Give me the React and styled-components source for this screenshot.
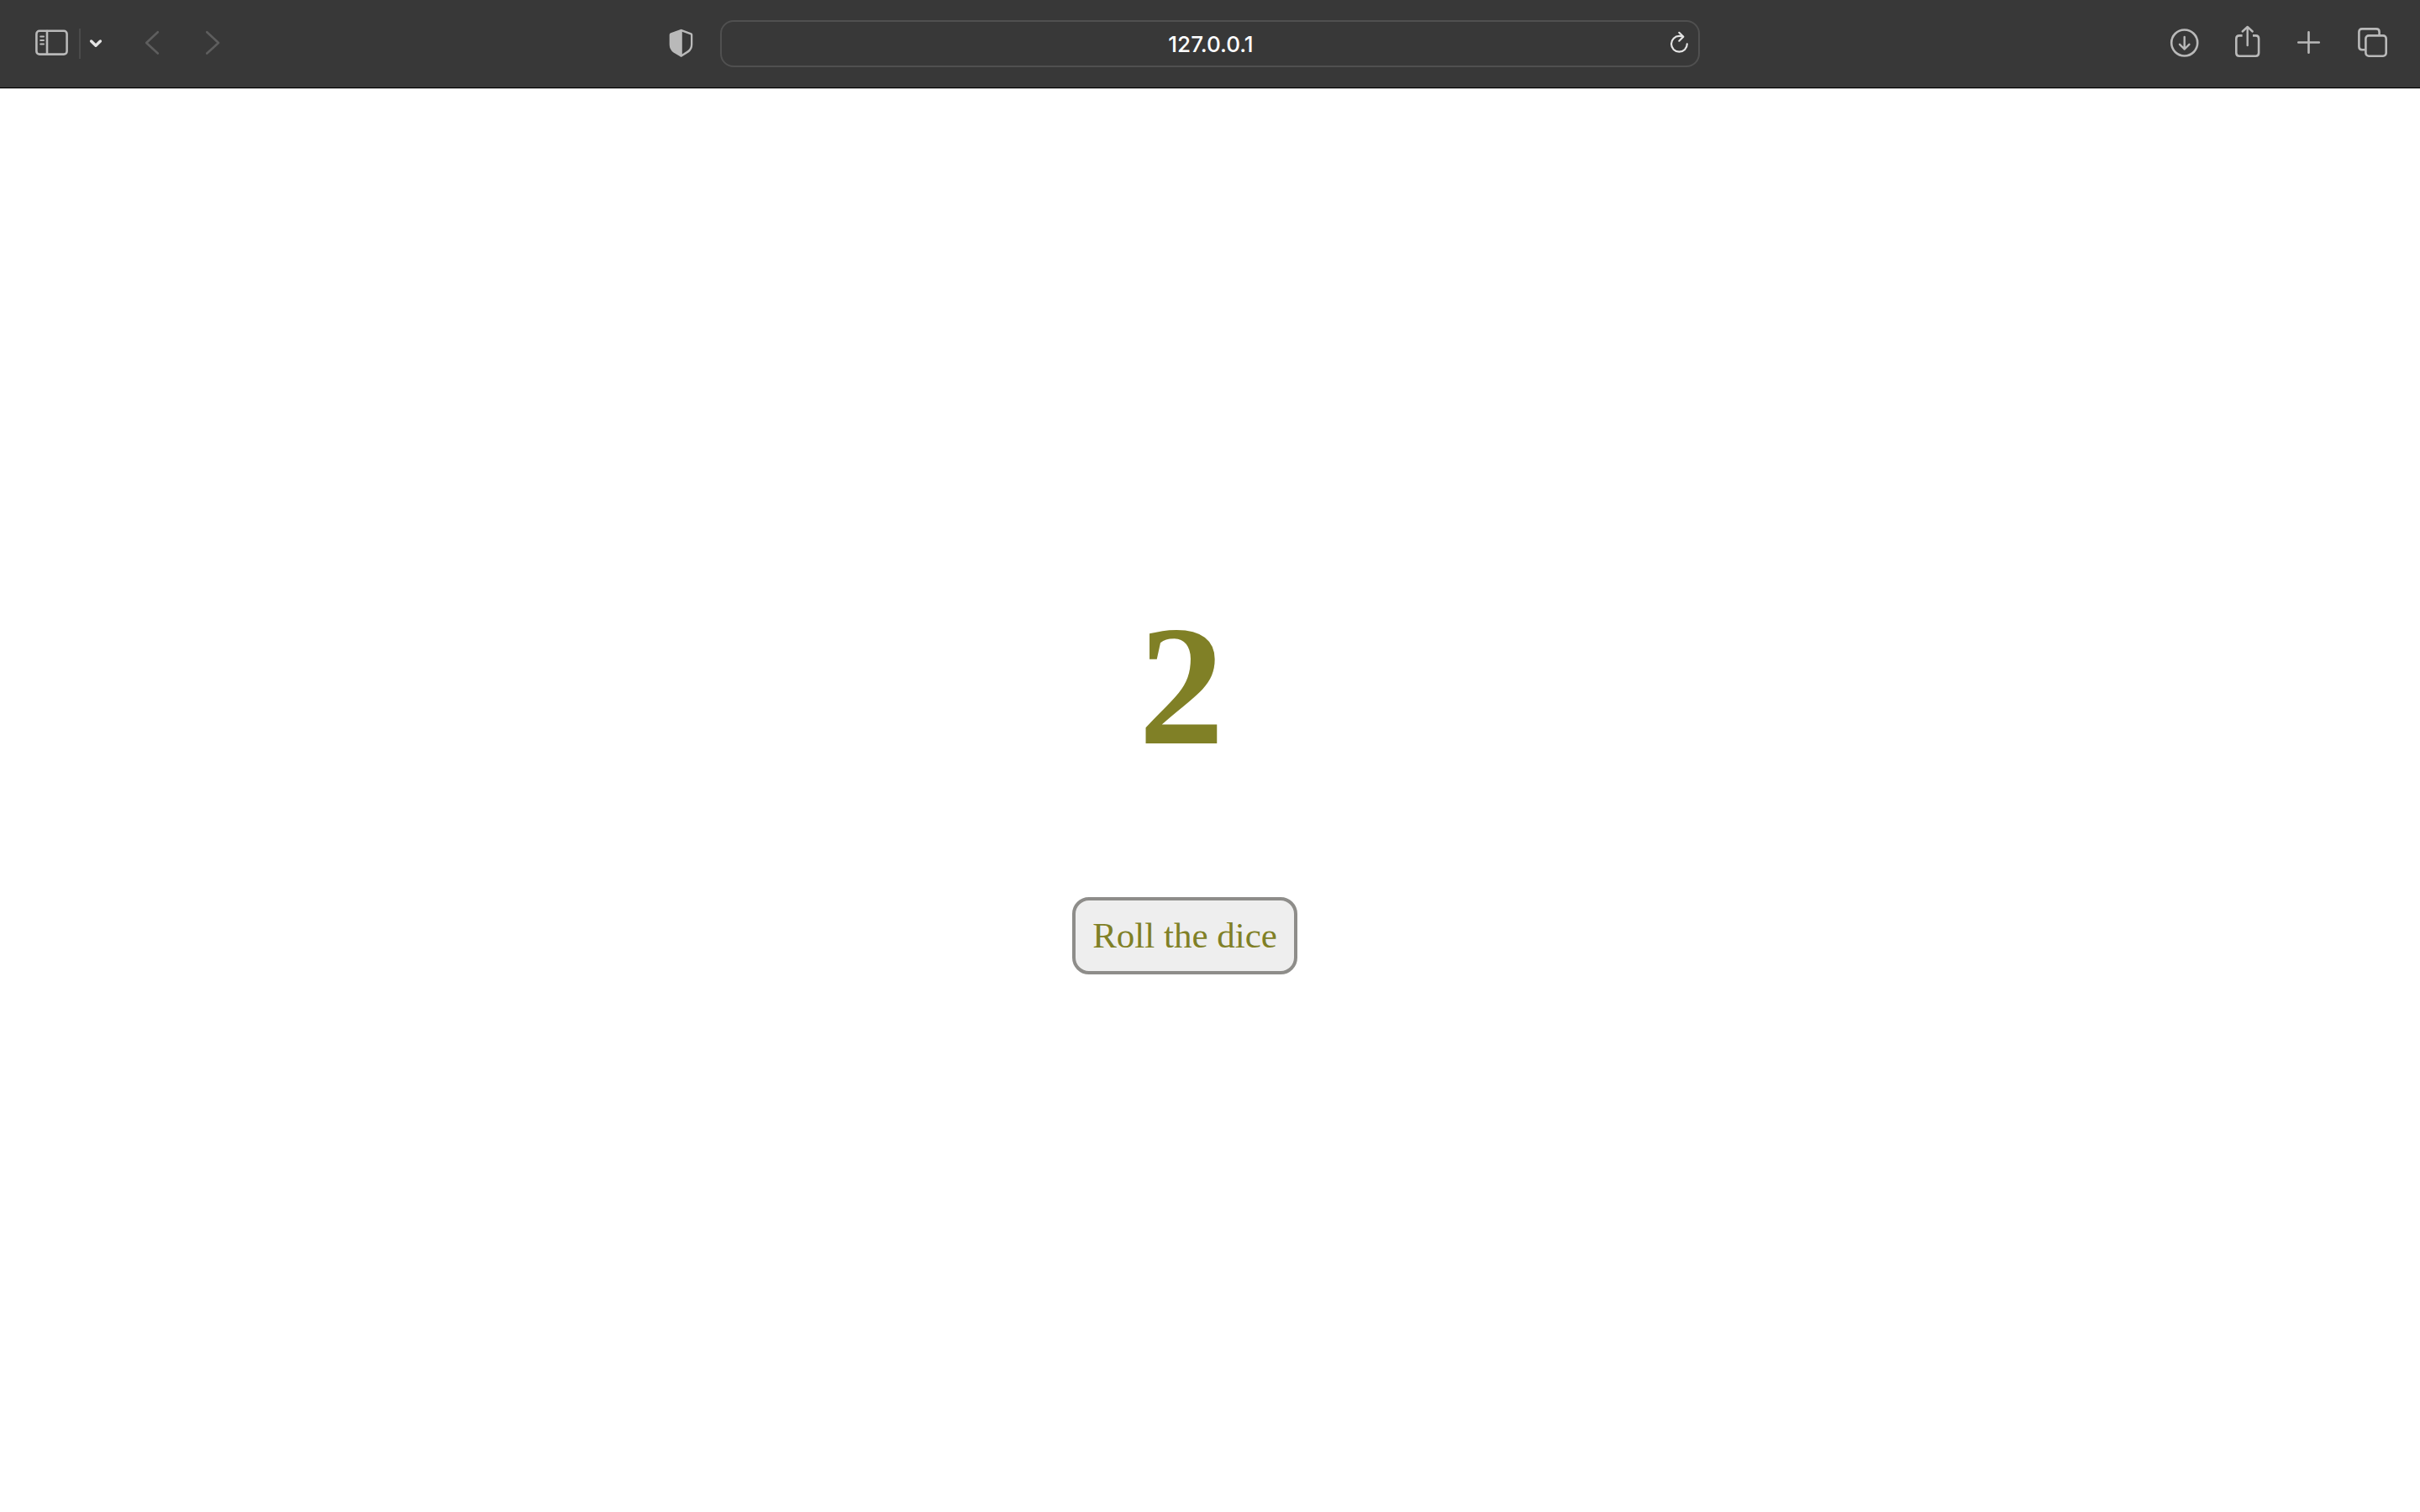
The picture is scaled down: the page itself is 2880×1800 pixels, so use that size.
import React, { useState } from "react";
import styled, { createGlobalStyle } from "styled-components";

const GlobalStyle = createGlobalStyle`
  * { box-sizing: border-box; }
  body { margin: 0; background: #fff; }
`;

const Window = styled.div`
  display: flex;
  flex-direction: column;
  min-height: 100vh;
`;

const Toolbar = styled.header`
  display: grid;
  grid-template-columns: 1fr minmax(0, 1166px) 1fr;
  align-items: center;
  padding: 24px 36px;
  background: #383838;
  border-bottom: 1px solid #000;
  box-shadow: 0 1px 0 #bdbdbd;
`;

const Group = styled.div`
  display: flex;
  align-items: center;
  justify-content: ${(p) => p.$justify || "flex-start"};
  gap: ${(p) => p.$gap || 0}px;
`;

const Navigation = styled(Group)`
  padding: 0 26px 0 6px;
`;

const History = styled(Group)`
  padding-left: 36px;
`;

const IconButton = styled.button`
  display: flex;
  flex: none;
  padding: 0;
  border: 0;
  background: none;
  color: ${(p) => p.$color || "#b9b9b9"};
`;

const Glyph = styled.svg`
  display: block;
  overflow: visible;
  fill: none;
  stroke: currentColor;
  stroke-width: ${(p) => p.$weight || 2.6};
  stroke-linecap: round;
  stroke-linejoin: round;
`;

const Divider = styled.span`
  width: 2px;
  height: 36px;
  margin: 0 6px 0 12px;
  background: #4b4b4b;
`;

const AddressBar = styled.form`
  display: flex;
  align-items: center;
  height: 56px;
  padding: 0 3px 0 45px;
  border: 2px solid #505050;
  border-radius: 16px;
`;

const AddressInput = styled.input`
  flex: 1;
  min-width: 0;
  padding: 2px 0 0;
  border: 0;
  outline: 0;
  background: none;
  color: #fff;
  font: 500 26px/32px Inter, "Liberation Sans", sans-serif;
  text-align: center;
`;

const Page = styled.main`
  display: flex;
  flex: 1;
  flex-direction: column;
  align-items: center;
  gap: 152px;
  padding: 611px 60px 0 0;
`;

const Score = styled.h1`
  margin: 0;
  padding-right: 8px;
  color: #808026;
  font: bold 204px/200px "Liberation Serif", serif;
`;

const RollButton = styled.button`
  padding: 18px 20px;
  border: 4px solid #8e8d8a;
  border-radius: 20px;
  background: #eee;
  color: #808026;
  font: 43px/48px Georgia, "Liberation Serif", serif;
`;

function Icon({ label, width = 40, weight, color, disabled, children }) {
  return (
    <IconButton type="button" aria-label={label} $color={color} disabled={disabled}>
      <Glyph width={width} height="40" viewBox={`0 0 ${width} 40`} $weight={weight} aria-hidden="true">
        {children}
      </Glyph>
    </IconButton>
  );
}

export default function App() {
  const [score, setScore] = useState(2);
  const roll = () => setScore(1 + Math.floor(Math.random() * 6));

  return (
    <Window>
      <GlobalStyle />
      <Toolbar>
        <Navigation $justify="space-between">
          <Group>
            <Icon label="Show sidebar">
              <rect x="1.4" y="4.8" width="36.2" height="27.8" rx="3.6" />
              <path d="M14 5v27.500" />
              <path d="M6.200 11.400h3.800M6.200 16h3.800M6.200 20.400h3.800" strokeWidth="2" />
            </Icon>
            <Divider />
            <Icon label="Tab groups" width={24} weight={3.4} color="#e4e4e4">
              <path d="M6.600 17l5.400 5.200 5.400-5.200" />
            </Icon>
            <History $gap={30}>
              <Icon label="Back" color="#5e5e5e" disabled>
                <path d="M25.800 6.200L12.200 19l13.600 12.500" />
              </Icon>
              <Icon label="Forward" color="#5e5e5e" disabled>
                <path d="M14.300 6.200L28 19 14.300 31.500" />
              </Icon>
            </History>
          </Group>
          <Icon label="Privacy report">
            <path
              d="M19.700 2.700L31.800 7.200Q33.300 7.800 33.300 9.500V21Q33.300 27 28.500 30.500L19.700 36 10.500 30.500Q5.700 27 5.700 21V9.500Q5.700 7.800 7.200 7.200ZM20.800 5.800V32.500L27.200 28.200Q31 25.500 31 21V9.500Z"
              fill="currentColor"
              fillRule="evenodd"
              stroke="none"
            />
          </Icon>
        </Navigation>

        <AddressBar onSubmit={(e) => e.preventDefault()}>
          <AddressInput aria-label="Address" defaultValue="127.0.0.1" spellCheck={false} />
          <Icon label="Reload" weight={2.2} color="#e4e4e4">
            <path d="M29.800 20.300a9.400 9.400 0 1 1-9.400-9.400q2.500 0 4.600.8" />
            <path d="M20.300 6.800l5 4.900-5 5" />
          </Icon>
        </AddressBar>

        <Group $justify="flex-end" $gap={35}>
          <Icon label="Downloads">
            <circle cx="20.700" cy="19" r="15.500" />
            <path d="M20.700 12v14.500M15 20.800l5.700 5.700 5.700-5.700" strokeWidth="2.400" />
          </Icon>
          <Icon label="Share">
            <path d="M14.600 10.400H11Q7.300 10.400 7.300 14V31Q7.300 34.700 11 34.700H30.500Q34.100 34.700 34.100 31V14Q34.100 10.400 30.500 10.400H27" strokeLinecap="butt" />
            <path d="M20.700 22V.500M14.700 5.500l6-5.500 6 5.500" strokeWidth="2.400" />
          </Icon>
          <Icon label="New tab">
            <path d="M18.500 6.300v24.500M6.300 18.500h24.500" />
          </Icon>
          <Icon label="Tab overview">
            <rect x="11.400" y="10.400" width="24.300" height="24.300" rx="3.600" />
            <path d="M10.500 27.200H7Q3.400 27.200 3.400 23.600V6Q3.400 2.400 7 2.400H24Q27.600 2.400 27.600 6V9.500" strokeLinecap="butt" />
          </Icon>
        </Group>
      </Toolbar>

      <Page>
        <Score aria-live="polite">{score}</Score>
        <RollButton type="button" onClick={roll}>Roll the dice</RollButton>
      </Page>
    </Window>
  );
}
